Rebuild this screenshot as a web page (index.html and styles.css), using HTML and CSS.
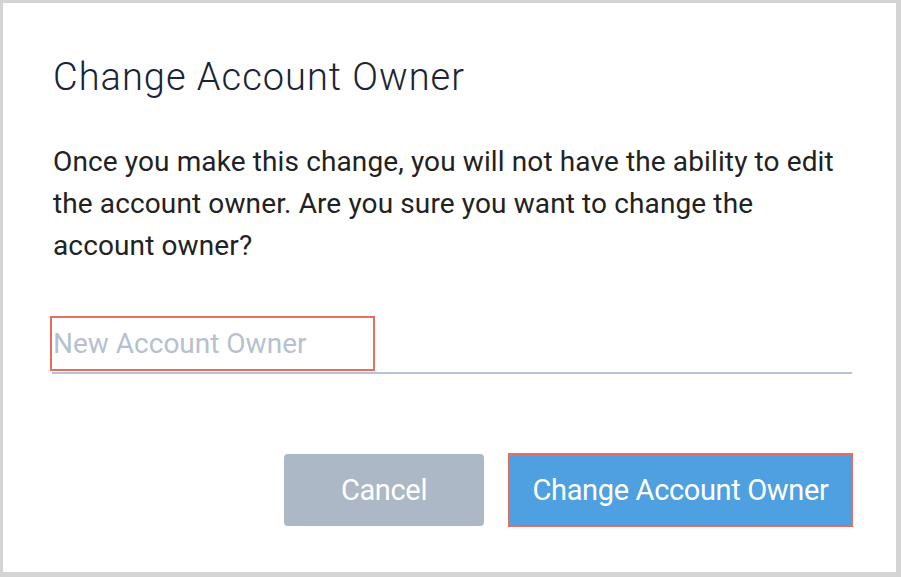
FILE: index.html
```html
<!DOCTYPE html>
<html>
<head>
<meta charset="utf-8">
<link rel="stylesheet" href="styles.css">
</head>
<body>
<div class="dialog">
  <h1 class="title">Change Account Owner</h1>
  <p class="message">Once you make this change, you will not have the ability to edit the account owner. Are you sure you want to change the account owner?</p>
  <div class="field">
    <div class="field-box"><input class="field-input" type="text" placeholder="New Account Owner"></div>
  </div>
  <div class="actions">
    <button class="btn btn-cancel">Cancel</button>
    <button class="btn btn-primary">Change Account Owner</button>
  </div>
</div>
</body>
</html>
```
FILE: styles.css
```css
html, body {
  margin: 0;
  padding: 0;
  height: 100%;
}
body {
  background: #d4d4d4;
  font-family: Roboto, "Liberation Sans", sans-serif;
  padding: 3px 5px 5px 3px;
  box-sizing: border-box;
}
.dialog {
  background: #ffffff;
  height: 100%;
  box-sizing: border-box;
  padding: 0 44px 0 49px;
  display: flex;
  flex-direction: column;
}
.title {
  margin: 50px 0 0 1px;
  font-size: 38px;
  font-weight: 300;
  line-height: 48px;
  letter-spacing: 1px;
  color: #1b2433;
}
.message {
  margin: 40px 0 0 1px;
  font-size: 28px;
  line-height: 42px;
  letter-spacing: 0.12px;
  color: #222222;
  font-weight: 400;
}
.field {
  margin-top: 49px;
  border-bottom: 2px solid #b8c3d1;
  height: 56px;
}
.field-box {
  width: 325px;
  height: 55px;
  margin-left: -2px;
  border: 2px solid #e96d5e;
  box-sizing: border-box;
  display: flex;
  align-items: center;
}
.field-input {
  border: none;
  outline: none;
  padding: 0 0 0 1px;
  margin: 0;
  font-family: Roboto, "Liberation Sans", sans-serif;
  font-size: 28px;
  color: #333;
  width: 100%;
  background: transparent;
}
.field-input::placeholder {
  color: #b5c1cf;
}
.actions {
  margin-top: 79px;
  display: flex;
  justify-content: flex-end;
  align-items: center;
  gap: 24px;
}
.btn {
  font-family: Roboto, "Liberation Sans", sans-serif;
  font-size: 29px;
  letter-spacing: -0.35px;
  color: #ffffff;
  border: none;
  padding: 0;
  cursor: pointer;
}
.btn-cancel {
  width: 200px;
  height: 72px;
  background: #adb8c6;
  border-radius: 4px;
}
.btn-primary {
  width: 345px;
  height: 74px;
  background: #4fa0e0;
  border: 2px solid #e96d5e;
  margin-right: -1px;
}
```
